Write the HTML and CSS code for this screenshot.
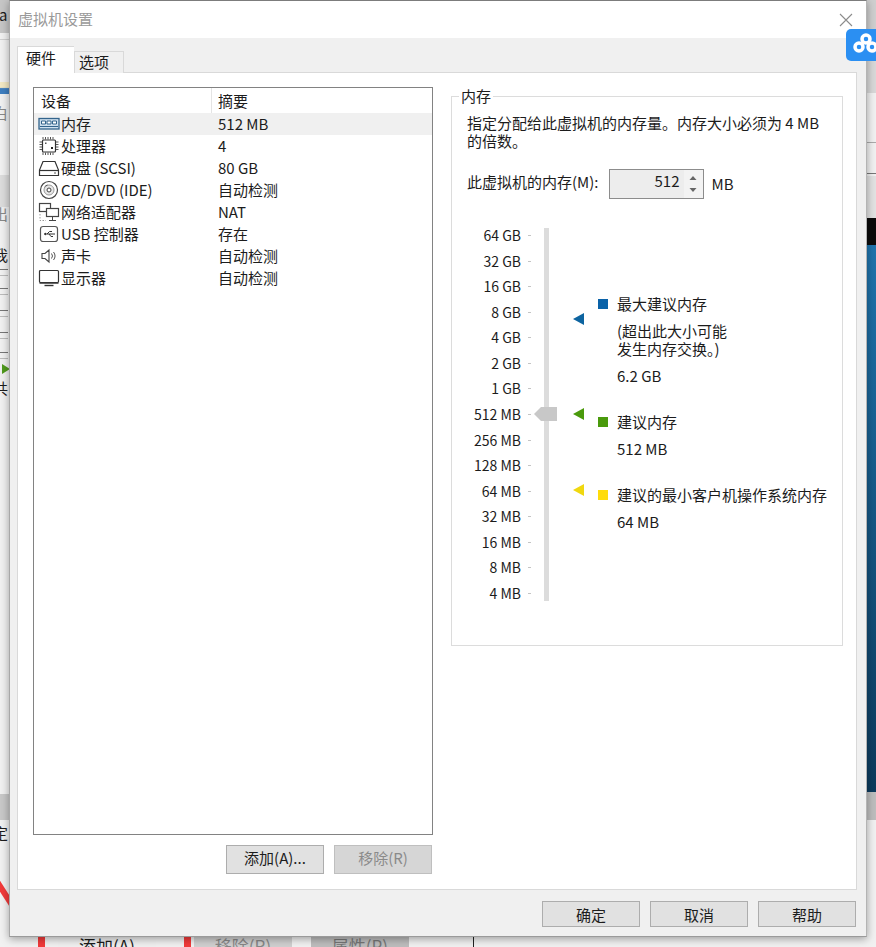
FILE: index.html
```html
<!DOCTYPE html>
<html lang="zh-CN">
<head>
    <meta charset="UTF-8">
    <meta name="viewport" content="width=device-width, initial-scale=1.0">
    <title>虚拟机设置</title>
    <link rel="stylesheet" href="styles.css">
</head>
<body>
    <!-- window behind the dialog, only its edges show -->
    <div class="behind">
        <div class="b-left-top"></div>
        <div class="b-left-line"></div>
        <div class="b-left-blue"></div>
        <div class="b-left-gray"></div>
        <div class="b-left-gray2"></div>
        <span class="b-text b-a">a</span>
        <span class="b-text b-bai">白</span>
        <span class="b-text b-chu">出</span>
        <span class="b-text b-wo">我</span>
        <span class="b-text b-gong">共</span>
        <span class="b-text b-ding">定</span>
        <div class="b-dash b-d1"></div>
        <div class="b-dash b-d2"></div>
        <div class="b-dash b-d3"></div>
        <div class="b-dash b-d4"></div>
        <div class="b-dash b-d5"></div>
        <svg class="b-play" width="9" height="10" viewBox="0 0 9 10"><path d="M1 0l8 5-8 5z" fill="#4f9a1c"/></svg>
        <svg class="b-slash" width="12" height="40" viewBox="0 0 12 40"><path d="M-4 2L12 27" stroke="#f23a3a" stroke-width="6" fill="none"/></svg>

        <div class="b-red b-r1"></div>
        <div class="b-red b-r2"></div>
        <div class="b-btn b-add">添加(A)</div>
        <div class="b-btn b-remove">移除(R)</div>
        <div class="b-btn b-prop">属性(P)</div>
        <div class="b-vline"></div>

        <div class="b-right-top"></div>
        <div class="b-right-gray"></div>
        <div class="b-right-box"></div>
        <div class="b-right-gray2"></div>
        <div class="b-right-black"></div>
        <div class="b-right-blue"></div>
        <div class="b-right-gray3"></div>
    </div>

    <div class="dialog">
        <div class="titlebar">
            <span class="title">虚拟机设置</span>
            <svg class="close" width="14" height="14" viewBox="0 0 14 14"><path d="M1 1l12 12M13 1L1 13" stroke="#8c8c8c" stroke-width="1.1" fill="none"/></svg>
        </div>
        <div class="dialog-body">
            <div class="tabs">
                <div class="tab active">硬件</div>
                <div class="tab">选项</div>
            </div>
            <div class="panel">
                <div class="left">
                    <div class="list">
                        <div class="list-head">
                            <div class="col-a">设备</div>
                            <div class="col-b">摘要</div>
                        </div>
                        <div class="row selected">
                            <div class="col-a">
                                <svg class="ico" width="22" height="14" viewBox="0 0 22 14"><rect x="1" y="1.500" width="20" height="10.500" fill="#cfe0ee" stroke="#33648c" stroke-width="1.300"/><path d="M3.500 4h4v3h-4zM9 4h4v3H9zM14.500 4h4v3h-4z" fill="#fff" stroke="#33648c"/><path d="M2 9.500h18" stroke="#33648c"/></svg>
                                <span>内存</span>
                            </div>
                            <div class="col-b">512 MB</div>
                        </div>
                        <div class="row">
                            <div class="col-a">
                                <svg class="ico" width="22" height="20" viewBox="0 0 22 20"><rect x="4.500" y="4" width="13" height="12" rx="1" fill="#fff" stroke="#333" stroke-width="1.200"/><path d="M5 1v2.500M7.500 1v2.500M10 1v2.500M12.500 1v2.500M15 1v2.500M5 16.500V19M7.500 16.500V19M10 16.500V19M12.500 16.500V19M15 16.500V19M1.500 6H4M1.500 8.500H4M1.500 11H4M1.500 13.500H4M18 6h2.500M18 8.500h2.500M18 11h2.500M18 13.500h2.500" stroke="#555" fill="none"/><rect x="13" y="11" width="2" height="2" fill="#222"/><rect x="7" y="6.500" width="1.500" height="1.500" fill="#555"/></svg>
                                <span>处理器</span>
                            </div>
                            <div class="col-b">4</div>
                        </div>
                        <div class="row">
                            <div class="col-a">
                                <svg class="ico" width="22" height="17" viewBox="0 0 22 17"><path d="M5 1.500h12l3.500 8.500v5.500h-19V10z" fill="#fff" stroke="#333" stroke-width="1.200"/><path d="M1.500 10.500h19" stroke="#333" stroke-width="1.200"/><path d="M16 13h2" stroke="#555"/></svg>
                                <span>硬盘 (SCSI)</span>
                            </div>
                            <div class="col-b">80 GB</div>
                        </div>
                        <div class="row">
                            <div class="col-a">
                                <svg class="ico" width="22" height="20" viewBox="0 0 22 20"><circle cx="11" cy="10" r="8.500" fill="#fff" stroke="#444" stroke-width="1.200"/><circle cx="11" cy="10" r="5" fill="#e6e6e6" stroke="#999"/><circle cx="11" cy="10" r="2" fill="#fff" stroke="#444"/><path d="M6.500 7a5.500 5.500 0 0 1 3-2" stroke="#555" fill="none"/></svg>
                                <span>CD/DVD (IDE)</span>
                            </div>
                            <div class="col-b">自动检测</div>
                        </div>
                        <div class="row">
                            <div class="col-a">
                                <svg class="ico" width="22" height="20" viewBox="0 0 22 20"><rect x="1.500" y="1.500" width="11" height="8" fill="#fff" stroke="#444" stroke-width="1.200"/><rect x="8.500" y="6.500" width="12" height="8" fill="#fff" stroke="#444" stroke-width="1.200"/><path d="M14.500 15v3M11 18.500h7" stroke="#444" fill="none"/><path d="M2 12v6.500h6" stroke="#999" stroke-dasharray="1.500 1.500" fill="none"/></svg>
                                <span>网络适配器</span>
                            </div>
                            <div class="col-b">NAT</div>
                        </div>
                        <div class="row">
                            <div class="col-a">
                                <svg class="ico" width="22" height="18" viewBox="0 0 22 18"><rect x="2.500" y="1.500" width="17" height="15" rx="2.500" fill="#fff" stroke="#555" stroke-width="1.200"/><path d="M6 9h11M9 9l2.500-2.500H14M11 9l2 2.500h2" stroke="#333" fill="none"/><path d="M6 9l2-1.500v3z" fill="#333"/></svg>
                                <span>USB 控制器</span>
                            </div>
                            <div class="col-b">存在</div>
                        </div>
                        <div class="row">
                            <div class="col-a">
                                <svg class="ico" width="22" height="16" viewBox="0 0 22 16"><path d="M4 5.500h3L11 2v12L7 10.500H4z" fill="#fff" stroke="#444" stroke-width="1.100"/><path d="M13.500 5.500a4 4 0 0 1 0 5M15.500 4a6.500 6.500 0 0 1 0 8" stroke="#555" fill="none"/></svg>
                                <span>声卡</span>
                            </div>
                            <div class="col-b">自动检测</div>
                        </div>
                        <div class="row">
                            <div class="col-a">
                                <svg class="ico" width="22" height="18" viewBox="0 0 22 18"><rect x="1.500" y="1.500" width="19" height="12" rx="1" fill="#fff" stroke="#333" stroke-width="1.200"/><path d="M1.500 14.500h19" stroke="#666"/><path d="M6.500 16.500h9" stroke="#333" stroke-width="1.400"/></svg>
                                <span>显示器</span>
                            </div>
                            <div class="col-b">自动检测</div>
                        </div>
                    </div>
                    <div class="list-actions">
                        <button class="btn">添加(A)...</button>
                        <button class="btn disabled">移除(R)</button>
                    </div>
                </div>

                <fieldset class="memory">
                    <legend>内存</legend>
                    <p class="desc">指定分配给此虚拟机的内存量。内存大小必须为 4 MB<br>的倍数。</p>
                    <div class="spin-row">
                        <label>此虚拟机的内存(M):</label>
                        <div class="spin">
                            <span class="spin-value">512</span>
                            <div class="spin-arrows">
                                <svg width="12" height="14" viewBox="0 0 12 14"><path d="M2.500 10L6 6l3.500 4z" fill="#666"/></svg>
                                <svg width="12" height="14" viewBox="0 0 12 14"><path d="M2.500 4L6 8l3.500-4z" fill="#666"/></svg>
                            </div>
                        </div>
                        <span class="unit">MB</span>
                    </div>

                    <div class="slider-area">
                        <div class="scale">
                            <div class="scale-row">64 GB</div>
                            <div class="scale-row">32 GB</div>
                            <div class="scale-row">16 GB</div>
                            <div class="scale-row">8 GB</div>
                            <div class="scale-row">4 GB</div>
                            <div class="scale-row">2 GB</div>
                            <div class="scale-row">1 GB</div>
                            <div class="scale-row">512 MB</div>
                            <div class="scale-row">256 MB</div>
                            <div class="scale-row">128 MB</div>
                            <div class="scale-row">64 MB</div>
                            <div class="scale-row">32 MB</div>
                            <div class="scale-row">16 MB</div>
                            <div class="scale-row">8 MB</div>
                            <div class="scale-row">4 MB</div>
                        </div>
                        <div class="track-zone">
                            <div class="track"></div>
                            <svg class="thumb" width="23" height="14" viewBox="0 0 23 14"><path d="M0 7l7-7h16v14H7z" fill="#c8c8c8"/></svg>
                            <svg class="mark mark-max" width="11" height="12" viewBox="0 0 11 12"><path d="M0 6l11-6v12z" fill="#0d64a0"/></svg>
                            <svg class="mark mark-rec" width="11" height="12" viewBox="0 0 11 12"><path d="M0 6l11-6v12z" fill="#4a9a0c"/></svg>
                            <svg class="mark mark-min" width="11" height="12" viewBox="0 0 11 12"><path d="M0 6l11-6v12z" fill="#f0d80f"/></svg>
                        </div>
                        <div class="legend">
                            <div class="legend-item">
                                <span class="sq sq-max"></span>
                                <div class="legend-text">
                                    <p>最大建议内存</p>
                                    <p>(超出此大小可能<br>发生内存交换。)</p>
                                    <p>6.2 GB</p>
                                </div>
                            </div>
                            <div class="legend-item">
                                <span class="sq sq-rec"></span>
                                <div class="legend-text">
                                    <p>建议内存</p>
                                    <p>512 MB</p>
                                </div>
                            </div>
                            <div class="legend-item">
                                <span class="sq sq-min"></span>
                                <div class="legend-text">
                                    <p>建议的最小客户机操作系统内存</p>
                                    <p>64 MB</p>
                                </div>
                            </div>
                        </div>
                    </div>
                </fieldset>
            </div>
            <div class="dialog-actions">
                <button class="btn">确定</button>
                <button class="btn">取消</button>
                <button class="btn">帮助</button>
            </div>
        </div>
    </div>

    <!-- floating netdisk badge -->
    <div class="badge">
        <svg width="30" height="32" viewBox="0 0 30 32"><g fill="none" stroke="#fff" stroke-width="3.500"><circle cx="20" cy="10" r="4"/><circle cx="13" cy="18" r="4"/><circle cx="26" cy="18" r="4"/></g></svg>
    </div>
</body>
</html>
```

FILE: styles.css
```css
html, body {
    margin: 0;
    height: 947px;
    overflow: hidden;
}

body {
    position: relative;
    width: 876px;
    background-color: #f1f1f1;
    font-family: "Noto Sans CJK SC", sans-serif;
    font-size: 15px;
    color: #1c1c1c;
}

p {
    margin: 0;
}

/* window behind */
.behind div, .behind span, .behind svg {
    position: absolute;
}

.b-left-top { left: 0; top: 0; width: 9px; height: 33px; background-color: #c6c6c6; }
.b-left-line { left: 0; top: 39px; width: 9px; height: 1px; background-color: #d0d0d0; }
.b-left-blue { left: 0; top: 82px; width: 9px; height: 12px; background: linear-gradient(#f3e9c4 45%, #3f7fc0 55%); }
.b-left-gray { left: 0; top: 175px; width: 9px; height: 32px; background-color: #dcdcdc; }
.b-left-gray2 { left: 0; top: 794px; width: 9px; height: 26px; background-color: #c8c8c8; }

.b-text { font-size: 15px; line-height: 20px; }
.b-a { left: -1px; top: 5px; }
.b-bai { left: -7px; top: 103px; color: #888; }
.b-chu { left: -7px; top: 204px; color: #888; }
.b-wo { left: -7px; top: 245px; }
.b-gong { left: -7px; top: 378px; }
.b-ding { left: -7px; top: 823px; }

.b-dash { left: 0; width: 8px; height: 5px; border-top: 1px solid #777; border-bottom: 1px solid #bbb; }
.b-d1 { top: 269px; }
.b-d2 { top: 288px; }
.b-d3 { top: 310px; }
.b-d4 { top: 332px; }
.b-d5 { top: 352px; }
.b-play { left: 1px; top: 364px; }
.b-slash { left: 0; top: 878px; }

.b-red { top: 937px; width: 7px; height: 10px; background-color: #f23a3a; }
.b-r1 { left: 38px; }
.b-r2 { left: 184px; }
.b-vline { left: 473px; top: 937px; width: 1px; height: 10px; background-color: #222; }
.b-btn { top: 937px; height: 10px; width: 98px; overflow: hidden; text-align: center; font-size: 17px; line-height: 18px; background-color: #e1e1e1; }
.b-add { left: 58px; background-color: #f0f0f0; }
.b-remove { left: 194px; background-color: #d0d0d0; color: #888; }
.b-prop { left: 311px; background-color: #bdbdbd; color: #777; }

.b-right-top { left: 867px; top: 0; width: 9px; height: 29px; background-color: #cfcfcf; }
.b-right-gray { left: 867px; top: 61px; width: 9px; height: 32px; background-color: #d8d8d8; }
.b-right-box { left: 864px; top: 142px; width: 12px; height: 32px; border-left: 2px solid #777; border-top: 1px solid #aaa; border-bottom: 1px solid #777; box-sizing: border-box; }
.b-right-gray2 { left: 867px; top: 176px; width: 9px; height: 42px; background-color: #e2e2e2; }
.b-right-black { left: 867px; top: 218px; width: 9px; height: 27px; background-color: #0b0b0b; }
.b-right-blue { left: 867px; top: 245px; width: 9px; height: 547px; background: linear-gradient(#1f74ad, #0c3a5c); }
.b-right-gray3 { left: 867px; top: 792px; width: 9px; height: 28px; background-color: #bdbdbd; }

/* dialog */
.dialog {
    position: absolute;
    left: 9px;
    top: 0;
    width: 858px;
    height: 937px;
    box-sizing: border-box;
    border-top: 1px solid #7c7c7c;
    border-left: 1px solid #a8a8a8;
    border-right: 1px solid #b4b4b4;
    border-bottom: 1px solid #9a9a9a;
    box-shadow: 0 2px 8px rgba(0, 0, 0, 0.35);
    background-color: #f0f0f0;
    display: flex;
    flex-direction: column;
}

.titlebar {
    height: 37px;
    background-color: #fff;
    display: flex;
    align-items: center;
    justify-content: space-between;
    padding: 0 13px 0 8px;
    flex: none;
}

.title {
    color: #9a9a9a;
    line-height: 20px;
    margin-top: -1px;
}

.close {
    margin-top: 1px;
}

.dialog-body {
    flex: 1;
    display: flex;
    flex-direction: column;
}

.tabs {
    display: flex;
    align-items: flex-end;
    height: 34px;
    padding-left: 7px;
    flex: none;
}

.tab {
    box-sizing: border-box;
    width: 50px;
    height: 22px;
    padding-left: 4px;
    line-height: 20px;
    background-color: #f0f0f0;
    border: 1px solid #d9d9d9;
    border-bottom: none;
    position: relative;
    top: 1px;
}

.tab.active {
    width: 57px;
    height: 27px;
    padding-left: 8px;
    background-color: #fff;
    line-height: 22px;
    z-index: 1;
    border-right: none;
}

.panel {
    box-sizing: border-box;
    flex: none;
    height: 818px;
    margin: 0 9px 0 7px;
    background-color: #fff;
    border: 1px solid #d9d9d9;
    display: flex;
    padding: 14px 0 0 15px;
}

.left {
    width: 400px;
    flex: none;
}

.list {
    box-sizing: border-box;
    height: 748px;
    border: 1px solid #828282;
    background-color: #fff;
}

.list-head {
    display: flex;
    height: 25px;
    line-height: 25px;
}

.list-head .col-a {
    padding-left: 7px;
    border-right: 1px solid #e4e4e4;
}

.list-head .col-b {
    padding-left: 6px;
}

.row {
    display: flex;
    align-items: center;
    height: 22px;
    line-height: 22px;
}

.row.selected {
    background-color: #f0f0f0;
}

.col-a {
    box-sizing: border-box;
    width: 178px;
    display: flex;
    align-items: center;
    padding-left: 4px;
    flex: none;
}

.col-b {
    padding-left: 6px;
}

.ico {
    margin-right: 1px;
    flex: none;
}

.list-actions {
    display: flex;
    justify-content: flex-end;
    gap: 10px;
    margin-top: 10px;
    padding-right: 1px;
}

.list-actions .btn {
    padding-bottom: 4px;
}

.btn {
    box-sizing: border-box;
    width: 98px;
    height: 29px;
    padding: 0;
    border: 1px solid #adadad;
    background-color: #e1e1e1;
    font: inherit;
    color: #1c1c1c;
}

.btn.disabled {
    background-color: #d6d6d6;
    border-color: #bfbfbf;
    color: #8a8a8a;
}

.dialog-actions {
    display: flex;
    justify-content: flex-end;
    gap: 10px;
    padding: 11px 10px 0 0;
}

.dialog-actions .btn {
    height: 26px;
}

/* memory group */
.memory {
    box-sizing: border-box;
    width: 392px;
    height: 560px;
    margin: -1px 0 0 18px;
    padding: 0 0 0 15px;
    border: 1px solid #dcdcdc;
    min-inline-size: 0;
}

.memory legend {
    padding: 0 2px;
    margin-left: -8px;
    line-height: 20px;
}

.desc {
    line-height: 18px;
    margin-top: 8px;
}

.spin-row {
    display: flex;
    align-items: center;
    margin-top: 19px;
}

.spin-row label {
    margin-top: -6px;
}

.spin {
    box-sizing: border-box;
    width: 95px;
    height: 30px;
    margin-left: 10px;
    border: 1px solid #8c8c8c;
    background-color: #ededed;
    display: flex;
    justify-content: flex-end;
}

.spin-value {
    line-height: 22px;
    padding-right: 4px;
}

.spin-arrows {
    width: 19px;
    background-color: #f3f3f3;
    display: flex;
    flex-direction: column;
    align-items: center;
}

.unit {
    margin-left: 8px;
    margin-top: -2px;
}

.slider-area {
    display: flex;
    margin-top: 27px;
}

.scale {
    width: 64px;
    height: 378px;
    margin-top: -1px;
    display: flex;
    flex-direction: column;
    justify-content: space-between;
    flex: none;
}

.scale-row {
    height: 20px;
    line-height: 20px;
    font-size: 14px;
    text-align: right;
    position: relative;
    padding-right: 10px;
}

.scale-row::after {
    content: "";
    position: absolute;
    right: 0;
    top: 10px;
    width: 3px;
    height: 1px;
    background-color: #c4c4c4;
}

.track-zone {
    position: relative;
    width: 67px;
    flex: none;
}

.track {
    position: absolute;
    left: 13px;
    top: 2px;
    width: 5px;
    height: 373px;
    background-color: #dcdcdc;
}

.thumb {
    position: absolute;
    left: 3px;
    top: 181px;
}

.mark {
    position: absolute;
    left: 42px;
}

.mark-max { top: 87px; }
.mark-rec { top: 182px; }
.mark-min { top: 258px; }

.legend {
    padding-top: 69px;
}

.legend-item {
    display: flex;
    margin-bottom: 28px;
}

.sq {
    width: 10px;
    height: 10px;
    margin: 4px 9px 0 0;
    flex: none;
}

.sq-max { background-color: #0a62a8; }
.sq-rec { background-color: #4a9a0c; }
.sq-min { background-color: #ffdc0a; }

.legend-text p {
    line-height: 18px;
    margin-bottom: 9px;
    white-space: nowrap;
}

.legend-text p:last-child {
    margin-bottom: 0;
}

/* netdisk badge */
.badge {
    position: absolute;
    left: 846px;
    top: 29px;
    width: 30px;
    height: 32px;
    overflow: hidden;
    background-color: #2b8ff2;
    border-radius: 5px 0 0 5px;
}

.badge svg {
    display: block;
}
```
